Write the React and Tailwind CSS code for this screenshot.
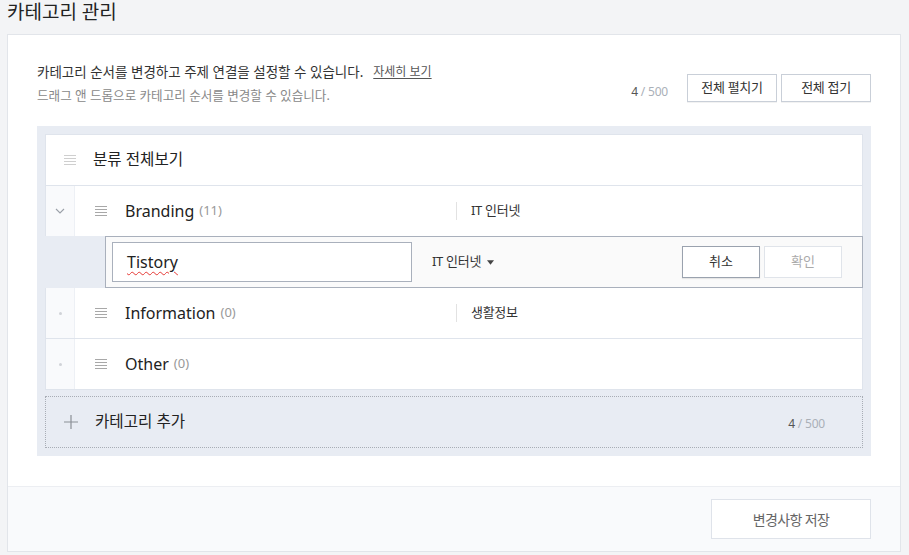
import { useState } from 'react'

function DragIcon({ className = '' }) {
  return (
    <svg viewBox="0 0 12 10" width="12" height="10" className={className} aria-hidden>
      <path d="M0 0.5h12M0 3.5h12M0 6.5h12M0 9.5h12" stroke="currentColor" strokeWidth="1" />
    </svg>
  )
}

function ChevronIcon({ className = '' }) {
  return (
    <svg viewBox="0 0 10 6" width="10" height="6" className={className} aria-hidden>
      <path d="M1 1l4 4 4-4" fill="none" stroke="currentColor" strokeWidth="1.1" />
    </svg>
  )
}

function PlusIcon({ className = '' }) {
  return (
    <svg viewBox="0 0 14 14" width="14" height="14" className={className} aria-hidden>
      <path d="M7 0v14M0 7h14" stroke="currentColor" strokeWidth="1.2" />
    </svg>
  )
}

function Count() {
  return (
    <span className="text-[12px] tracking-[-0.2px]">
      <span className="text-[#555]">4</span>
      <span className="text-[#aab0b8]"> / 500</span>
    </span>
  )
}

function CategoryRow({ name, count, topic, open }) {
  return (
    <div
      className={`flex items-center border-x border-[#dfe4ec] bg-white ${
        open ? 'h-[50px]' : 'h-[51px] border-b'
      }`}
    >
      <div className="flex h-full w-[29px] shrink-0 items-center justify-center border-r border-[#edf0f5] bg-[#f9fafc]">
        {open ? (
          <ChevronIcon className="text-[#9aa0a8]" />
        ) : (
          <span className="block h-[3px] w-[3px] rounded-full bg-[#d0d3d8]" />
        )}
      </div>
      <div className="flex w-[381px] shrink-0 items-center">
        <DragIcon className="ml-[20px] text-[#a8a8a8]" />
        <span className="ml-[18px] text-[16px] text-[#222]">{name}</span>
        <span className="ml-[5px] text-[13px] text-[#999]">({count})</span>
      </div>
      {topic && (
        <div className="flex items-center">
          <span className="h-[18px] border-l border-[#e2e2e2]" />
          <span className="pl-[14px] text-[13px] tracking-[-0.3px] text-[#333]">{topic}</span>
        </div>
      )}
    </div>
  )
}

export default function App() {
  const [name] = useState('Tistory')

  return (
    <div className="h-[555px] w-[909px] overflow-hidden bg-[#f3f4f6] font-['Noto_Sans','Noto_Sans_CJK_KR',sans-serif] text-[#333]">
      <div className="h-[34px] pl-[7px] text-[19px] leading-[25px] text-[#222]">카테고리 관리</div>

      <div className="ml-[7px] w-[894px] border border-[#e2e5ea] bg-white">
        <div className="px-[29px] pb-[30px] pt-[26px]">
          <div className="mb-[19px] flex h-[46px] items-start justify-between">
            <div>
              <div className="flex h-[22px] items-center text-[13.5px] text-[#333]">
                카테고리 순서를 변경하고 주제 연결을 설정할 수 있습니다.
                <a className="ml-[10px] text-[12px] text-[#555] underline underline-offset-2">자세히 보기</a>
              </div>
              <div className="mt-[2px] flex h-[22px] items-center text-[12.6px] text-[#888]">
                드래그 앤 드롭으로 카테고리 순서를 변경할 수 있습니다.
              </div>
            </div>
            <div className="flex items-center pt-[13px]">
              <span className="mr-[19px] pt-[4px]">
                <Count />
              </span>
              <button className="h-[28px] w-[90px] border border-[#c9cfd8] bg-white text-[13px] tracking-[-0.3px] text-[#333] shadow-[0_1px_0_rgba(0,0,0,0.05)]">
                전체 펼치기
              </button>
              <button className="ml-[4px] h-[28px] w-[90px] border border-[#c9cfd8] bg-white text-[13px] tracking-[-0.3px] text-[#333] shadow-[0_1px_0_rgba(0,0,0,0.05)]">
                전체 접기
              </button>
            </div>
          </div>

          <div className="bg-[#e8ecf3] p-[8px]">
            <div className="flex h-[52px] items-center border border-[#dfe4ec] bg-white pl-[18px]">
              <DragIcon className="text-[#cfcfcf]" />
              <span className="ml-[17px] text-[15.6px] text-[#222]">분류 전체보기</span>
            </div>

            <CategoryRow name="Branding" count={11} topic="IT 인터넷" open />

            <div className="flex h-[52px]">
              <div className="w-[60px] shrink-0" />
              <div className="flex flex-1 items-center border border-[#a9b0bc] bg-[#fafafa] pl-[6px] pr-[20px]">
                <div className="flex h-[40px] w-[300px] items-center border border-[#a9b0bc] bg-white pl-[14px]">
                  <span className="text-[16px] text-[#222] underline decoration-[#e53935] decoration-wavy decoration-1 underline-offset-[3px]">
                    {name}
                  </span>
                </div>
                <div className="ml-[20px] flex items-center text-[13px] tracking-[-0.3px] text-[#333]">
                  IT 인터넷
                  <svg viewBox="0 0 8 5" width="7" height="5" className="ml-[6px] text-[#444]" aria-hidden>
                    <path d="M0 0h8L4 5z" fill="currentColor" />
                  </svg>
                </div>
                <button className="ml-auto h-[32px] w-[78px] border border-[#9aa2ae] bg-white text-[13px] text-[#333] shadow-[0_1px_1px_rgba(0,0,0,0.08)]">
                  취소
                </button>
                <button className="ml-[4px] h-[32px] w-[78px] border border-[#e0e4ea] bg-white text-[13px] text-[#aaa]">
                  확인
                </button>
              </div>
            </div>

            <CategoryRow name="Information" count={0} topic="생활정보" />
            <CategoryRow name="Other" count={0} />

            <div className="mt-[6px] flex h-[52px] items-center border border-dotted border-[#a8adb5] pl-[18px] pr-[37px]">
              <PlusIcon className="text-[#8a8f96]" />
              <span className="ml-[17px] text-[15.6px] text-[#222]">카테고리 추가</span>
              <span className="ml-auto">
                <Count />
              </span>
            </div>
          </div>
        </div>

        <div className="flex justify-end border-t border-[#eceef2] bg-[#f9fafc] px-[29px] py-[12px]">
          <button className="h-[40px] w-[160px] border border-[#dfe3ea] bg-white text-[14px] tracking-[-0.6px] text-[#666]">
            변경사항 저장
          </button>
        </div>
      </div>
    </div>
  )
}
